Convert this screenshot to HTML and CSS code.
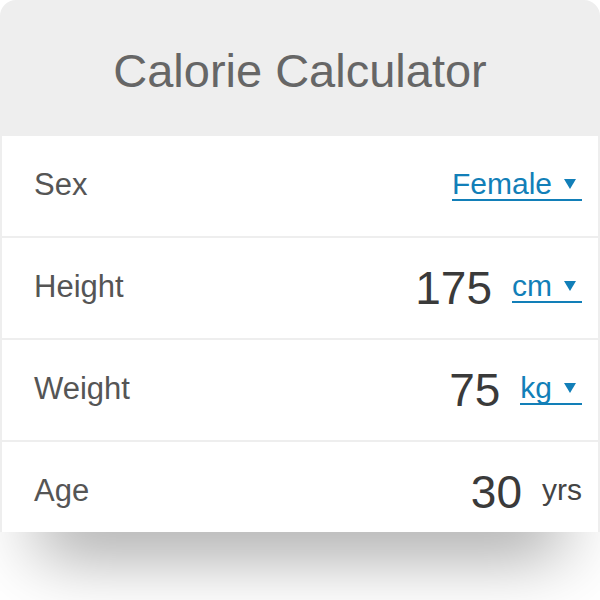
FILE: index.html
```html
<!DOCTYPE html>
<html lang="en">
<head>
  <meta charset="UTF-8" />
  <meta name="viewport" content="width=device-width, initial-scale=1.0"/>
  <title>Calorie Calculator</title>
  <link rel="stylesheet" href="styles.css">
</head>
<body>

<div class="calculator">
  <h1 class="title">Calorie Calculator</h1>
  <div class="rows">
    <div class="row">
      <span class="label">Sex</span>
      <div class="value">
        <a class="unit link" href="#">Female<i class="caret"></i></a>
      </div>
    </div>

    <div class="row">
      <span class="label">Height</span>
      <div class="value">
        <span class="number">175</span>
        <a class="unit link" href="#">cm<i class="caret"></i></a>
      </div>
    </div>

    <div class="row">
      <span class="label">Weight</span>
      <div class="value">
        <span class="number">75</span>
        <a class="unit link" href="#">kg<i class="caret"></i></a>
      </div>
    </div>

    <div class="row">
      <span class="label">Age</span>
      <div class="value">
        <span class="number">30</span>
        <span class="unit">yrs</span>
      </div>
    </div>
  </div>
</div>
<div class="shadow"></div>

</body>
</html>
```

FILE: styles.css
```css
body {
  margin: 0;
  background: #fff;
  font-family: 'Liberation Sans', Arial, sans-serif;
  overflow: hidden;
}
.calculator {
  background: #eeeeee;
  border-radius: 16px 16px 0 0;
  padding: 0 2px;
}
.title {
  margin: 0;
  height: 136px;
  padding-top: 4px;
  box-sizing: border-box;
  display: flex;
  align-items: center;
  justify-content: center;
  font-size: 47px;
  font-weight: normal;
  color: #666;
}
/* the last row is cut off by the card edge */
.rows {
  display: flex;
  flex-direction: column;
  gap: 2px;
  height: 396px;
  overflow: hidden;
}
.row {
  flex: 0 0 100px;
  background: #fff;
  display: flex;
  align-items: center;
  justify-content: space-between;
  padding: 0 16px 0 32px;
}
.label {
  font-size: 31px;
  line-height: 1;
  color: #555;
  margin-bottom: 3px;
}
.value {
  display: flex;
  align-items: center;
}
.number {
  font-size: 46px;
  line-height: 1;
  color: #3a3a3a;
  margin-right: 20px;
}
.unit {
  font-size: 30px;
  line-height: 1;
  color: #444;
  margin-bottom: 5px;
}
.link {
  display: inline-block;
  color: #127fb8;
  text-decoration: none;
  border-bottom: 2px solid #127fb8;
  margin-bottom: 3px;
}
.caret {
  display: inline-block;
  width: 0;
  height: 0;
  border-left: 6px solid transparent;
  border-right: 6px solid transparent;
  border-top: 10px solid #127fb8;
  margin: 0 6px 5px 12px;
}
.shadow {
  height: 68px;
  overflow: hidden;
}
.shadow::before {
  content: '';
  display: block;
  height: 40px;
  margin: -40px 50px 0;
  box-shadow: 0 8px 70px 12px rgba(0, 0, 0, 0.4);
}
```
